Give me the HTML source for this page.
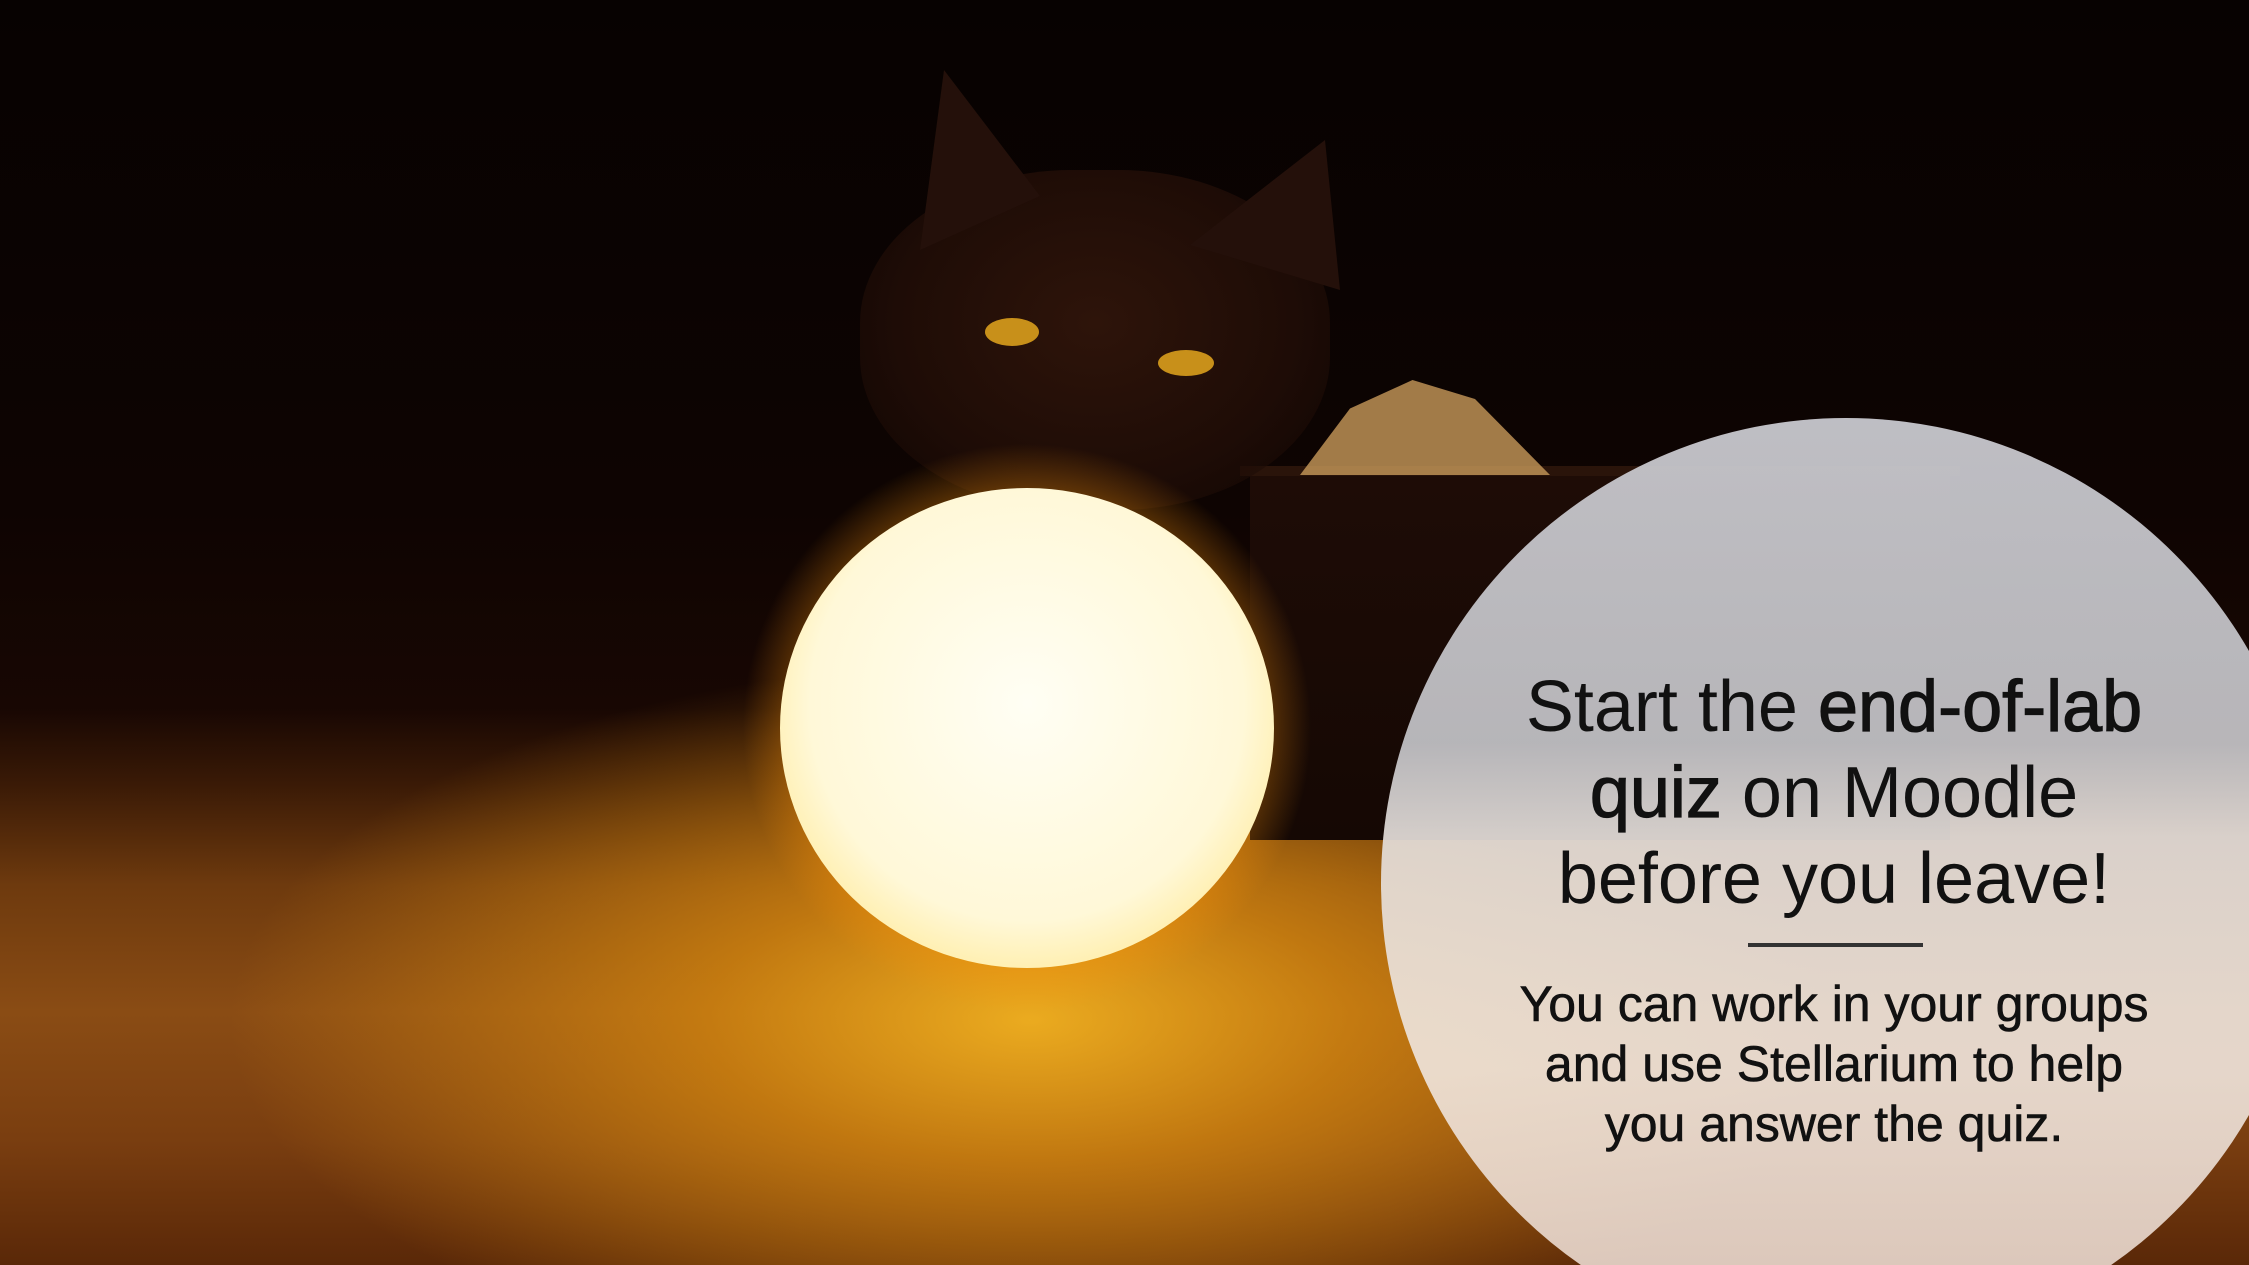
<!DOCTYPE html>
<html><head><meta charset="utf-8"><style>
html,body{margin:0;padding:0;width:2249px;height:1265px;overflow:hidden}
body{position:relative;background:#0a0302;font-family:"Liberation Sans",sans-serif}
.abs{position:absolute}
.t{position:absolute;left:1834px;white-space:nowrap;transform:translateX(-50%);color:#111;text-align:center}
</style></head><body>
<div class="abs" style="left:0;top:0;width:2249px;height:1265px;overflow:hidden">
<div class="abs" style="left:0;top:0;width:2249px;height:1265px;background:linear-gradient(180deg,#070201 0%,#0e0402 40%,#180703 56%,#3a1a06 62%,#6e3a0e 70%,#8a4c14 80%,#7a3e10 90%,#5a2808 100%)"></div>
<div class="abs" style="left:0;top:680px;width:2249px;height:585px;background:radial-gradient(ellipse 800px 360px at 1030px 340px,rgba(240,176,32,0.95) 0%,rgba(216,138,16,0.75) 40%,rgba(160,80,20,0) 100%)"></div>
<div class="abs" style="left:1250px;top:472px;width:700px;height:368px;background:linear-gradient(180deg,#1e0c06,#150804)"></div>
<div class="abs" style="left:1240px;top:466px;width:720px;height:10px;background:#2a140a"></div>
<div class="abs" style="left:1300px;top:380px;width:250px;height:95px;background:#c89a5a;clip-path:polygon(0 100%,20% 30%,45% 0,70% 20%,100% 100%);opacity:.8"></div>
<div class="abs" style="left:860px;top:170px;width:470px;height:340px;border-radius:45%;background:radial-gradient(ellipse at 50% 45%,#2e140a 0%,#1e0c06 60%,rgba(20,8,4,0) 100%)"></div>
<div class="abs" style="left:920px;top:70px;width:120px;height:180px;background:#24100a;clip-path:polygon(0 100%,20% 0,100% 70%)"></div>
<div class="abs" style="left:1190px;top:140px;width:150px;height:150px;background:#24100a;clip-path:polygon(0 70%,90% 0,100% 100%)"></div>
<div class="abs" style="left:985px;top:318px;width:54px;height:28px;border-radius:50%;background:#c8901a"></div>
<div class="abs" style="left:1158px;top:350px;width:56px;height:26px;border-radius:50%;background:#c8901a"></div>
<div class="abs" style="left:740px;top:441px;width:574px;height:574px;border-radius:50%;background:radial-gradient(circle,rgba(255,150,10,0.8) 40%,rgba(255,120,0,0) 70%)"></div>
<div class="abs" style="left:780px;top:488px;width:494px;height:480px;border-radius:50%;background:radial-gradient(circle at 50% 45%,#fffef4 0%,#fff8d8 60%,#ffe890 85%,#ffc030 100%)"></div>
<div class="abs" style="left:1381px;top:418px;width:868px;height:847px;overflow:hidden">
<div class="abs" style="left:0;top:0;width:930px;height:930px;border-radius:50%;background:linear-gradient(180deg,rgba(200,200,206,0.95) 0%,rgba(196,196,200,0.92) 35%,rgba(228,222,218,0.92) 45%,rgba(240,230,222,0.9) 70%,rgba(232,212,200,0.9) 100%)"></div>
</div>
<div class="t" style="top:664px;font-size:72px;line-height:86px">Start the <span style="-webkit-text-stroke:1.2px #111">end-of-lab</span><br><span style="-webkit-text-stroke:1.2px #111">quiz</span> on Moodle<br>before you leave!</div>
<div class="abs" style="left:1748px;top:943px;width:175px;height:4px;background:#333"></div>
<div class="t" style="top:974px;font-size:50px;line-height:60px;-webkit-text-stroke:0.6px #111">You can work in your groups<br>and use Stellarium to help<br>you answer the quiz.</div>
</div>
</body></html>
